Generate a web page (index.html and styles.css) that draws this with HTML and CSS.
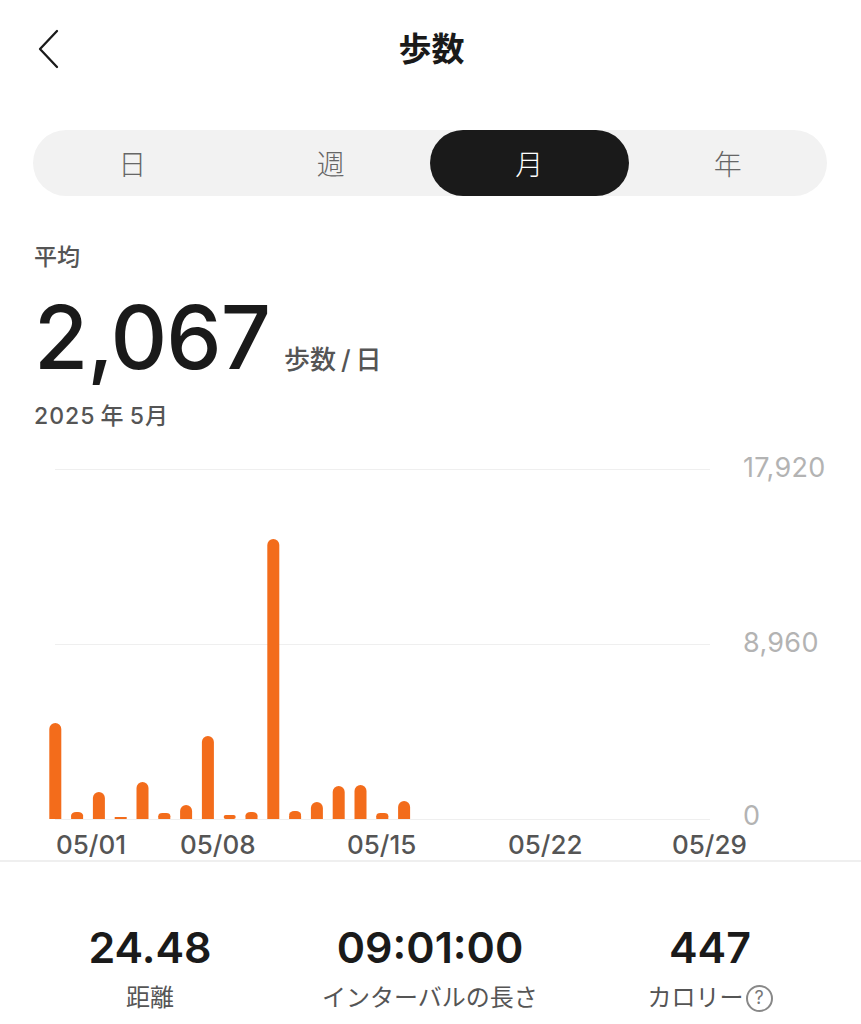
FILE: index.html
```html
<!DOCTYPE html>
<html lang="ja">
<head>
<meta charset="utf-8">
<title>歩数</title>
<link rel="stylesheet" href="styles.css">
</head>
<body>
<div class="page">
  <header class="header">
    <div class="back">
      <svg width="24" height="40" viewBox="0 0 24 40"><path d="M20 2 L3 20 L20 38" fill="none" stroke="#1a1a1a" stroke-width="2.3" stroke-linecap="round" stroke-linejoin="round"/></svg>
    </div>
    <h1 class="title">歩数</h1>
    <div></div>
  </header>

  <nav class="segment">
    <div class="seg">日</div>
    <div class="seg">週</div>
    <div class="seg active">月</div>
    <div class="seg">年</div>
  </nav>

  <section class="summary">
    <div class="avg-label">平均</div>
    <div class="avg-row">
      <span class="avg-num">2,067</span>
      <span class="avg-unit">歩数 / 日</span>
    </div>
    <div class="avg-date">2025 年 5月</div>
  </section>

  <svg class="chart" width="861" height="410" viewBox="0 0 861 410">
    <line class="grid" x1="55" y1="19.5" x2="710" y2="19.5"/>
    <line class="grid" x1="55" y1="194.5" x2="710" y2="194.5"/>
    <line class="grid" x1="55" y1="369.5" x2="710" y2="369.5"/>
    <g class="bars">
      <path d="M49.3 369 V279 A6 6 0 0 1 61.3 279 V369 Z"/>
      <path d="M92.9 369 V348 A6 6 0 0 1 104.9 348 V369 Z"/>
      <rect x="114.7" y="367" width="12" height="2"/>
      <path d="M136.5 369 V338 A6 6 0 0 1 148.5 338 V369 Z"/>
      <path d="M180.1 369 V361 A6 6 0 0 1 192.1 361 V369 Z"/>
      <path d="M201.9 369 V292 A6 6 0 0 1 213.9 292 V369 Z"/>
      <rect x="223.7" y="365" width="12" height="4" rx="2"/>
      <path d="M267.3 369 V95 A6 6 0 0 1 279.3 95 V369 Z"/>
      <path d="M310.9 369 V358 A6 6 0 0 1 322.9 358 V369 Z"/>
      <path d="M332.7 369 V342 A6 6 0 0 1 344.7 342 V369 Z"/>
      <path d="M354.5 369 V341 A6 6 0 0 1 366.5 341 V369 Z"/>
      <path d="M398.1 369 V357 A6 6 0 0 1 410.1 357 V369 Z"/>
      <rect x="71.1" y="362" width="12" height="7" rx="5"/>
      <rect x="71.1" y="366" width="12" height="3"/>
      <rect x="158.3" y="363" width="12" height="6" rx="4"/>
      <rect x="158.3" y="366" width="12" height="3"/>
      <rect x="245.5" y="362" width="12" height="7" rx="5"/>
      <rect x="245.5" y="366" width="12" height="3"/>
      <rect x="289.1" y="361" width="12" height="8" rx="5"/>
      <rect x="289.1" y="366" width="12" height="3"/>
      <rect x="376.3" y="363" width="12" height="6" rx="4"/>
      <rect x="376.3" y="366" width="12" height="3"/>
    </g>
    <text class="ylab" x="743" y="27">17,920</text>
    <text class="ylab" x="743" y="202">8,960</text>
    <text class="ylab" x="743" y="375">0</text>
    <text class="xlab" x="56" y="404">05/01</text>
    <text class="xlab" x="180" y="404">05/08</text>
    <text class="xlab" x="347" y="404">05/15</text>
    <text class="xlab" x="508" y="404">05/22</text>
    <text class="xlab" x="672" y="404">05/29</text>
  </svg>

  <div class="divider"></div>

  <section class="stats">
    <div class="stat">
      <div class="stat-num">24.48</div>
      <div class="stat-label">距離</div>
    </div>
    <div class="stat">
      <div class="stat-num">09:01:00</div>
      <div class="stat-label">インターバルの長さ</div>
    </div>
    <div class="stat">
      <div class="stat-num">447</div>
      <div class="stat-label">カロリー<span class="help">?</span></div>
    </div>
  </section>
</div>
</body>
</html>
```

FILE: styles.css
```css
* { box-sizing: border-box; }
html, body { margin: 0; padding: 0; background: #fff; }
body {
  font-family: Inter, "Noto Sans CJK JP", sans-serif;
  color: #1a1a1a;
  width: 861px;
  overflow: hidden;
}
.page { width: 861px; }

.header {
  height: 98px;
  display: grid;
  grid-template-columns: 1fr auto 1fr;
  align-items: center;
}
.back { padding-left: 37px; display: flex; align-items: center; }
.back svg { display: block; }
.title {
  margin: 0;
  font-size: 33px;
  font-weight: 700;
  line-height: 1;
  color: #1a1a1a;
  padding-left: 2px;
}

.segment {
  margin: 32px 34px 0 33px;
  height: 66px;
  border-radius: 33px;
  background: #f2f2f2;
  display: grid;
  grid-template-columns: repeat(4, 1fr);
}
.seg {
  display: flex;
  align-items: center;
  justify-content: center;
  font-size: 28px;
  font-weight: 300;
  color: #666;
  border-radius: 33px;
}
.seg.active { background: #1a1a1a; color: #fff; }

.summary { padding-left: 34px; }
.avg-label {
  margin-top: 45px;
  font-size: 23px;
  line-height: 32px;
  font-weight: 500;
  color: #555;
}
.avg-row {
  margin-top: 20px;
  display: flex;
  align-items: baseline;
}
.avg-num {
  font-size: 88px;
  line-height: 88px;
  font-weight: 500;
  letter-spacing: -1px;
  color: #1a1a1a;
}
.avg-unit {
  margin-left: 14px;
  font-size: 26px;
  font-weight: 500;
  color: #555;
  word-spacing: -2px;
}
.avg-date {
  margin-top: 20px;
  font-size: 23px;
  line-height: 30px;
  font-weight: 500;
  color: #555;
  letter-spacing: 1px;
  word-spacing: -2px;
}

.chart { display: block; margin-top: 19px; }
.grid { stroke: #efefef; stroke-width: 1; }
.bars path, .bars rect { fill: #f36c1b; }
.ylab { font-family: Inter, sans-serif; font-size: 27px; fill: #b3b3b3; letter-spacing: 0.3px; }
.xlab { font-family: Inter, sans-serif; font-size: 26px; fill: #555; font-weight: 500; }

.divider { height: 2px; background: #efefef; }

.stats {
  display: grid;
  grid-template-columns: repeat(3, 280px);
  padding-left: 10px;
  padding-top: 59px;
}
.stat { display: flex; flex-direction: column; align-items: center; }
.stat-num {
  font-size: 43px;
  line-height: 52px;
  font-weight: 600;
  color: #1a1a1a;
}
.stat-label {
  margin-top: 9px;
  font-size: 24px;
  line-height: 32px;
  color: #555;
  display: flex;
  align-items: center;
}
.help {
  display: inline-flex;
  align-items: center;
  justify-content: center;
  width: 27px;
  height: 27px;
  margin-left: 2px;
  border: 2px solid #888;
  border-radius: 50%;
  font-size: 18px;
  line-height: 1;
  color: #777;
}
```
